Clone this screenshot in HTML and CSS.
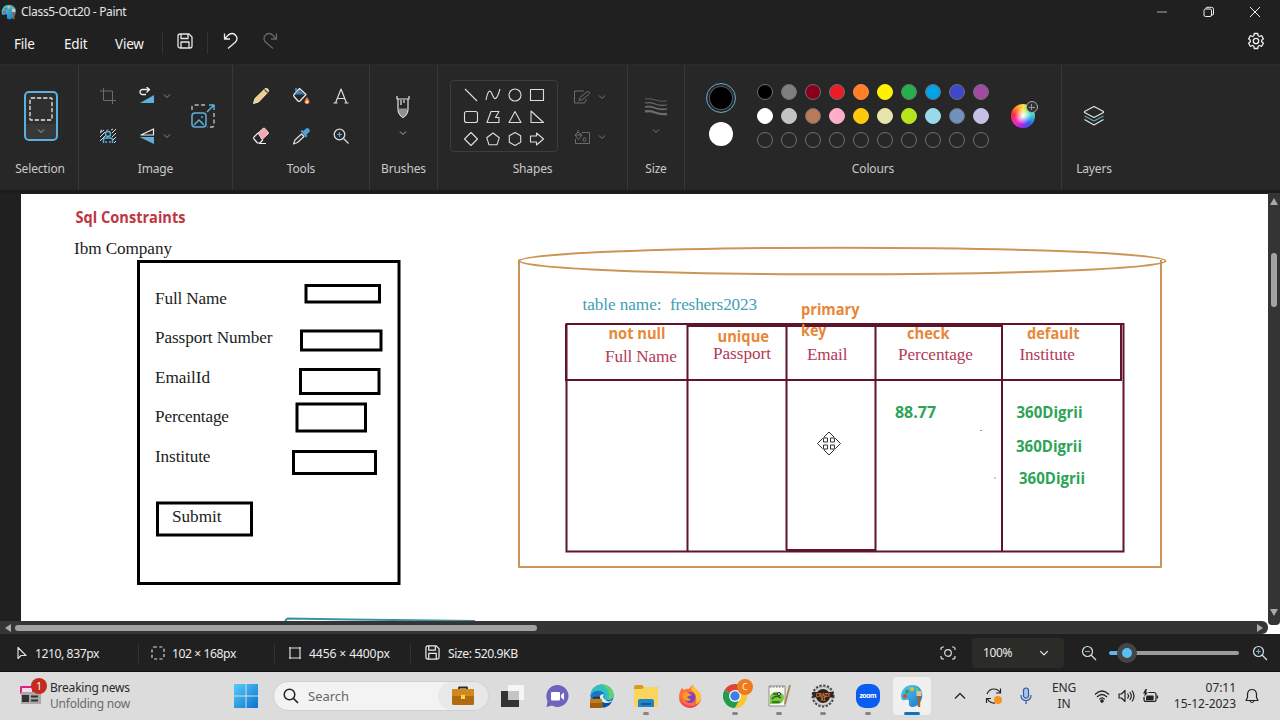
FILE: index.html
```html
<!DOCTYPE html>
<html lang="en">
<head>
    <meta charset="UTF-8">
    <meta name="viewport" content="width=device-width, initial-scale=1.0">
    <title>Class5-Oct20 - Paint</title>
    <link rel="stylesheet" href="styles.css">
</head>
<body>

<svg class="defs" width="0" height="0">
    <defs>
        <symbol id="chev" viewBox="0 0 8 8"><path d="M1 2.500l3 3 3-3" fill="none" stroke="currentColor" stroke-width="1"/></symbol>
        <symbol id="save" viewBox="0 0 16 16">
            <path d="M1 3a2 2 0 0 1 2-2h9l3 3v9a2 2 0 0 1-2 2H3a2 2 0 0 1-2-2zM4 1v4.500h7V1M4 15V9h8v6" fill="none" stroke="currentColor" stroke-width="1.300"/>
        </symbol>
        <linearGradient id="gPal" x1="0" y1="0" x2="1" y2="1"><stop offset="0" stop-color="#55cdf2"/><stop offset="1" stop-color="#1677c4"/></linearGradient>
        <symbol id="palette" viewBox="0 0 24 24">
            <path d="M12 1C5 1 1 6.500 1 12c0 4 2 5 4 4 3-1.500 4.500 0 4 3-.5 4 3 5 7 3 9-5 9-21-4-21z" fill="url(#gPal)"/>
            <circle cx="12" cy="5" r="2" fill="#f2b632"/><circle cx="7" cy="7.500" r="2" fill="#3f9d45"/>
            <circle cx="5" cy="12" r="2" fill="#c8503c"/><circle cx="17" cy="5.500" r="1.500" fill="#5ed06a"/>
            <path d="M16.500 7h5v5h-5z" fill="#dcc7a2"/><path d="M16.500 12h5l-1.300 3v8h-2.400v-8z" fill="#9c6434"/>
        </symbol>
    </defs>
</svg>

<div class="window">
    <header class="titlebar">
        <svg class="app-icon" width="16" height="16"><use href="#palette"/></svg>
        <span class="title">Class5-Oct20 - Paint</span>
        <div class="win-buttons">
            <svg width="12" height="12" viewBox="0 0 12 12"><path d="M1 6h10" stroke="#aaa"/></svg>
            <svg width="12" height="12" viewBox="0 0 12 12"><rect x="1" y="3" width="7.500" height="7.500" rx="1.500"/><path d="M3 3V2.300q0-1 1-1H8.500a2 2 0 0 1 2 2V8q0 1-1.500 1"/></svg>
            <svg width="12" height="12" viewBox="0 0 12 12"><path d="M1 1l10 10M11 1L1 11"/></svg>
        </div>
    </header>

    <nav class="menubar">
        <span class="menu menu-file">File</span>
        <span class="menu menu-edit">Edit</span>
        <span class="menu menu-view">View</span>
        <i class="bar"></i>
        <svg class="m-save" width="16" height="16"><use href="#save"/></svg>
        <i class="bar"></i>
        <svg class="m-undo" width="16" height="18" viewBox="0 0 16 18"><path d="M1.500 1.500v5.500h5.500M1.800 6.800l3-3.300c3-3 6-2.300 8 0 1.800 2.300 1.500 4.500-.3 6.500L5 16.500"/></svg>
        <svg class="m-redo" width="16" height="18" viewBox="0 0 16 18"><path d="M14.500 1.500v5.500H9M14.200 6.800l-3-3.300c-3-3-6-2.300-8 0-1.800 2.300-1.500 4.500.3 6.500l7.500 6.500"/></svg>
        <svg class="m-gear" width="18" height="18" viewBox="0 0 18 18"><path d="M7.300 1.500h3.400l.5 2.300 1.200.7 2.300-.8 1.700 3L14.700 8.300v1.400l1.700 1.600-1.700 3-2.300-.8-1.200.7-.5 2.300H7.300l-.5-2.300-1.200-.7-2.300.8-1.700-3 1.700-1.600V8.300L1.600 6.700l1.700-3 2.300.8 1.200-.7z"/><circle cx="9" cy="9" r="2.700"/></svg>
    </nav>

    <section class="ribbon">
        <div class="group g-selection">
            <div class="tools">
                <div class="select-btn">
                    <svg width="24" height="24" viewBox="0 0 24 24"><rect x="1" y="1" width="22" height="22" rx="1" fill="none" stroke="#e8e8e8" stroke-width="1.300" stroke-dasharray="4.200 1.900"/></svg>
                    <svg class="chev" width="8" height="8"><use href="#chev"/></svg>
                </div>
            </div>
            <div class="label">Selection</div>
        </div>

        <div class="group g-image">
            <div class="tools">
                <div class="image-grid">
                    <svg class="crop off" width="18" height="18" viewBox="0 0 18 18"><path d="M1 4h12.500V17M4.500 1v12.500H17"/></svg>
                    <svg width="18" height="18" viewBox="0 0 18 18"><path d="M8 7.500H4.500a2.500 2.500 0 0 1 0-5H11M8.500 0l3 2.500-3 3" stroke="#eee" stroke-width="1.300"/><path d="M16 8v8H2z" fill="#5bb0dc"/></svg>
                    <svg class="chev off" width="8" height="8"><use href="#chev"/></svg>
                    <svg class="resize" width="26" height="26" viewBox="0 0 26 26">
                        <path d="M2 7V4q0-2 2-2h11M24 10v12q0 2-2 2h-5" stroke="#bbb" stroke-width="1.400" stroke-dasharray="4 2.500"/>
                        <rect x="2" y="10" width="14" height="14" rx="3" stroke="#5bb0dc" stroke-width="1.500"/>
                        <path d="M4 22l5-5 5 5M17 9l7-7M19 2h5v5" stroke="#5bb0dc" stroke-width="1.500"/><circle cx="12" cy="14" r="1" fill="#5bb0dc"/>
                    </svg>
                    <svg class="crop" width="18" height="16" viewBox="0 0 18 16"><path d="M1 5l4-3M1 9l5-5M1 13l5-5M3 2L1 3.500M9 1.500L7.500 3M17 5l-4 4M17 9l-4 4M17 13l-2 2M12 2l2-1M13 5l4-4" stroke="#ddd"/><circle cx="9" cy="6" r="2.500" stroke="#5bb0dc" stroke-width="1.400"/><path d="M4.500 15v-3q0-2 2-2h5q2 0 2 2v3M7 15v-2M11 15v-2" stroke="#5bb0dc" stroke-width="1.400"/></svg>
                    <svg width="18" height="18" viewBox="0 0 18 18"><path d="M15.500 2v6H3z" stroke="#eee" stroke-width="1.200"/><path d="M16 10v7L1.500 10z" fill="#5bb0dc"/></svg>
                    <svg class="chev off" width="8" height="8"><use href="#chev"/></svg>
                </div>
            </div>
            <div class="label">Image</div>
        </div>

        <div class="group g-tools">
            <div class="tools">
                <div class="tools-grid">
                    <svg width="18" height="18" viewBox="0 0 18 18"><path d="M1.500 16.500l1.500-5L13 1.800q1.500-1 2.800.3t.4 2.800L6.500 15z" fill="#ecd08a" stroke="#f4ecd8"/><path d="M12.500 2.500l3.200 3.200" stroke="#555" stroke-width="1.300"/></svg>
                    <svg width="18" height="18" viewBox="0 0 18 18"><path d="M7.500 1.500l6.500 6-6 6.500q-1 .8-2 0L2 9.500q-.8-1 0-2z" stroke="#eee" stroke-width="1.200"/><path d="M3 7.500l4.500-4.500 5 4.500z" fill="#3b85bd"/><path d="M4 1v5" stroke="#5bb0dc" stroke-width="1.300"/><path d="M15 10q5 6.500 0 7-5-.5 0-7z" fill="#e8864d"/><circle cx="15" cy="15" r="1.200" fill="#fbe6c4"/></svg>
                    <svg width="18" height="18" viewBox="0 0 18 18"><path d="M3.500 16L9 2l5.500 14M5.500 11.500h7M1.500 16h4M12.500 16h4" stroke="#ddd" stroke-width="1.200"/></svg>
                    <svg width="18" height="18" viewBox="0 0 18 18"><path d="M6 6l5-4.500q1-.8 2 0L16 5q.8 1 0 2l-6 5.500z" fill="#f3a9b4" stroke="#f7d0d5"/><path d="M6 6L2 10q-.8 1 0 2l3.500 4h2.500l3-3.500M7 16.500h7" stroke="#eee" stroke-width="1.200"/></svg>
                    <svg width="18" height="18" viewBox="0 0 18 18"><path d="M9.500 7L3 13l-1.500 4 4-1.500 6.500-6z" stroke="#ddd" stroke-width="1.200"/><path d="M8.500 4l1.500-1 1.500 1 2.500-2.500q1.500-1 3 .5t.3 3L14.500 7.500l1 1.500-1.500 1.500z" fill="#4da3d4"/></svg>
                    <svg width="18" height="18" viewBox="0 0 18 18"><circle cx="7.500" cy="7.500" r="5.300" stroke="#ddd" stroke-width="1.300"/><path d="M11.500 11.500l5 5" stroke="#ddd" stroke-width="1.300"/><path d="M7.500 5v5M5 7.500h5" stroke="#5bb0dc" stroke-width="1.200"/></svg>
                </div>
            </div>
            <div class="label">Tools</div>
        </div>

        <div class="group g-brushes">
            <div class="tools stack">
                <svg width="16" height="24" viewBox="0 0 16 24"><path d="M2 1v3h12V1M3 4v10q0 5 5 8.500 5-3.500 5-8.500V4M6 5v5M9 5v3" stroke="#e4e4e4" stroke-width="1.200"/><path d="M3.500 13.500h9q0 5-4.500 8.500-4.500-3.500-4.500-8.500z" fill="#919191"/></svg>
                <svg class="chev" width="8" height="8"><use href="#chev"/></svg>
            </div>
            <div class="label">Brushes</div>
        </div>

        <div class="group g-shapes">
            <div class="tools">
                <div class="shape-box">
                    <svg viewBox="0 0 16 16"><path d="M2 2l12 12"/></svg>
                    <svg viewBox="0 0 16 16"><path d="M1 13C3 3 5 2 7 7s4 9 8-5"/></svg>
                    <svg viewBox="0 0 16 16"><circle cx="8" cy="8" r="6"/></svg>
                    <svg viewBox="0 0 16 16"><path d="M1.500 2.500h13v11h-13z"/></svg>
                    <svg viewBox="0 0 16 16"><rect x="1.500" y="2.500" width="13" height="11" rx="2"/></svg>
                    <svg viewBox="0 0 16 16"><path d="M6 2.500h8l-3.500 6h3.500v5H2z"/></svg>
                    <svg viewBox="0 0 16 16"><path d="M8 2.500l6 11H2z"/></svg>
                    <svg viewBox="0 0 16 16"><path d="M2 2v11.500h12.500z"/></svg>
                    <svg viewBox="0 0 16 16"><path d="M8 1.500L14.500 8 8 14.500 1.500 8z"/></svg>
                    <svg viewBox="0 0 16 16"><path d="M8 2l6.300 4.700L12 13.800H4L1.700 6.700z"/></svg>
                    <svg viewBox="0 0 16 16"><path d="M8 1.500l5.700 3.200v6.600L8 14.500l-5.700-3.200V4.700z"/></svg>
                    <svg viewBox="0 0 16 16"><path d="M1.500 5h6V2L14.500 8l-7 6v-3h-6z"/></svg>
                </div>
                <div class="shape-opts off">
                    <svg width="18" height="16" viewBox="0 0 18 16"><path d="M11 2H1.500v12h10l2-4M6 11.500l1-3L14 2.800q1.500-.8 2.300.3t-.3 2.200L9 10.800z"/></svg>
                    <svg class="chev" width="8" height="8"><use href="#chev"/></svg>
                    <svg width="18" height="16" viewBox="0 0 18 16"><path d="M9 3.500h7.500v11h-14V10M5 1v3M2 6l3-3 4 3-3.500 4.500zM2 6h7M11.500 8q3 4 0 4.500-3-.5 0-4.500z"/></svg>
                    <svg class="chev" width="8" height="8"><use href="#chev"/></svg>
                </div>
            </div>
            <div class="label">Shapes</div>
        </div>

        <div class="group g-size">
            <div class="tools stack off">
                <svg width="24" height="20" viewBox="0 0 24 20"><path d="M1 2q5-1 10 1t12 1" stroke-width=".8"/><path d="M1 6q5-1 10 1t12 1" stroke-width="1.200"/><path d="M1 10q5-1 10 1t12 1" stroke-width="1.700"/><path d="M1 14.500q5-1 10 1t12 1.500" stroke-width="2.300"/></svg>
                <svg class="chev" width="8" height="8"><use href="#chev"/></svg>
            </div>
            <div class="label">Size</div>
        </div>

        <div class="group g-colours">
            <div class="tools">
                <div class="current">
                    <b class="fore"></b>
                    <b class="back"></b>
                </div>
                <div class="swatches">
                    <b class="black"></b><b class="grey"></b><b class="darkred"></b><b class="red"></b><b class="orange"></b><b class="yellow"></b><b class="green"></b><b class="turquoise"></b><b class="indigo"></b><b class="purple"></b>
                    <b class="white"></b><b class="silver"></b><b class="brown"></b><b class="rose"></b><b class="gold"></b><b class="cream"></b><b class="lime"></b><b class="sky"></b><b class="bluegrey"></b><b class="lavender"></b>
                    <b></b><b></b><b></b><b></b><b></b><b></b><b></b><b></b><b></b><b></b>
                </div>
                <div class="wheel"><span class="plus"></span></div>
            </div>
            <div class="label">Colours</div>
        </div>

        <div class="group g-layers">
            <div class="tools">
                <svg width="22" height="22" viewBox="0 0 22 22"><path d="M11 1.500l9.500 5v1L11 12.500 1.500 7.500v-1z" stroke="#e4e4e4" stroke-width="1.200"/><path d="M1.500 11L11 16l9.500-5" stroke="#58a9bd" stroke-width="1.200"/><path d="M1.500 14.500l9.500 5.500 9.500-5.500" stroke="#e4e4e4" stroke-width="1.200"/></svg>
            </div>
            <div class="label">Layers</div>
        </div>
    </section>

    <main class="workspace">
        <svg class="canvas" width="1247" height="427" viewBox="21 194 1247 427">
            <!-- form -->
            <text class="head" x="75.500" y="223" textLength="110" lengthAdjust="spacingAndGlyphs">Sql Constraints</text>
            <text class="form" x="74" y="254" textLength="98">Ibm Company</text>
            <g class="box">
                <rect x="138.500" y="261.500" width="260.500" height="322"/>
                <rect x="306" y="285.500" width="73.500" height="16.500"/>
                <rect x="301.500" y="331" width="79.500" height="19"/>
                <rect x="300.500" y="369.500" width="78.500" height="24"/>
                <rect x="297" y="404" width="68.500" height="27"/>
                <rect x="293.500" y="451.500" width="82" height="22"/>
                <rect x="157.500" y="503" width="94" height="32"/>
            </g>
            <g class="form">
                <text x="155" y="304" textLength="72">Full Name</text>
                <text x="155" y="343" textLength="117.500">Passport Number</text>
                <text x="155" y="382.500" textLength="55">EmailId</text>
                <text x="155" y="422" textLength="74">Percentage</text>
                <text x="155" y="461.500" textLength="55.500">Institute</text>
                <text x="172" y="522" textLength="49.500">Submit</text>
            </g>

            <!-- database -->
            <path class="db" d="M519 259.500V567H1161V260"/>
            <ellipse class="db" cx="842.500" cy="261" rx="323" ry="13.300"/>

            <!-- table -->
            <text class="tname" x="582.500" y="309.500" textLength="79">table name:</text>
            <text class="tname" x="670" y="309.500" textLength="87">freshers2023</text>
            <g class="table">
                <path d="M566.500 324H1123.500V551.500H566.500z"/>
                <path d="M566 324v56h555V324M687.500 324v227M786.500 325v225M875.500 325v226M1002 325v226M687 326h315M786 550h90"/>
            </g>
            <g class="rule">
                <text x="608.500" y="338.500" textLength="57" lengthAdjust="spacingAndGlyphs">not null</text>
                <text x="717.500" y="342" textLength="51.500" lengthAdjust="spacingAndGlyphs">unique</text>
                <text x="801" y="314.500" textLength="58.500" lengthAdjust="spacingAndGlyphs">primary</text>
                <text x="801" y="336" textLength="25.500" lengthAdjust="spacingAndGlyphs">key</text>
                <text x="907" y="339" textLength="42.500" lengthAdjust="spacingAndGlyphs">check</text>
                <text x="1027" y="339" textLength="52.500" lengthAdjust="spacingAndGlyphs">default</text>
            </g>
            <g class="col">
                <text x="605" y="362" textLength="72">Full Name</text>
                <text x="713" y="359" textLength="58">Passport</text>
                <text x="807" y="360" textLength="40.500">Email</text>
                <text x="898" y="360" textLength="75">Percentage</text>
                <text x="1019.500" y="360" textLength="55.500">Institute</text>
            </g>
            <g class="value">
                <text x="895" y="418" textLength="41" lengthAdjust="spacingAndGlyphs">88.77</text>
                <text x="1016.500" y="418" textLength="66" lengthAdjust="spacingAndGlyphs">360Digrii</text>
                <text x="1016" y="452" textLength="66" lengthAdjust="spacingAndGlyphs">360Digrii</text>
                <text x="1019" y="483.500" textLength="66" lengthAdjust="spacingAndGlyphs">360Digrii</text>
            </g>
            <path d="M980.500 430.500h1.200M994.500 478h1.200" stroke="#555"/>
            <path d="M285 621l2.500-2.500L350 619.500 475 621" fill="none" stroke="#3a91a6" stroke-width="2"/>

            <!-- move cursor -->
            <path class="cursor" transform="translate(829 443.500)" d="M0-11.500L5-6.500V-5.500H1.500V-1.500H5.500V-5H6.500L11.500 0 6.500 5H5.500V1.500H1.500V5.500H5V6.500L0 11.500-5 6.500V5.500H-1.500V1.500H-5.500V5H-6.500L-11.500 0-6.500-5H-5.500V-1.500H-1.500V-5.500H-5V-6.500z"/>
        </svg>

        <div class="vscroll">
            <svg width="8" height="7" viewBox="0 0 8 7"><path d="M4 0l4 7H0z"/></svg>
            <i class="thumb"></i>
            <svg class="down" width="8" height="7" viewBox="0 0 8 7"><path d="M4 7L0 0h8z"/></svg>
        </div>
        <div class="hscroll">
            <svg width="7" height="8" viewBox="0 0 7 8"><path d="M0 4l6-4v8z"/></svg>
            <i class="thumb"></i>
            <svg class="right" width="7" height="8" viewBox="0 0 7 8"><path d="M7 4L1 0v8z"/></svg>
        </div>
        <div class="corner"></div>
    </main>

    <footer class="statusbar">
        <div class="stat s-pos">
            <svg width="10" height="14" viewBox="0 0 10 14"><path d="M1 1.500v11L4 9.500h5z"/></svg>
            <span>1210, 837px</span>
        </div>
        <div class="stat s-sel">
            <svg width="14" height="14" viewBox="0 0 14 14"><rect x="1" y="1" width="12" height="12" rx="2" stroke-dasharray="3 2.300"/></svg>
            <span>102 × 168px</span>
        </div>
        <div class="stat s-dim">
            <svg width="14" height="14" viewBox="0 0 14 14"><path d="M2 1v12M12 1v12M1 2h12M1 12h12"/></svg>
            <span>4456 × 4400px</span>
        </div>
        <div class="stat s-size">
            <svg width="15" height="15"><use href="#save"/></svg>
            <span>Size: 520.9KB</span>
        </div>
        <div class="zoom">
            <svg width="16" height="14" viewBox="0 0 16 14"><path d="M1 4V3q0-2 2-2h1M12 1h1q2 0 2 2v1M15 10v1q0 2-2 2h-1M4 13H3q-2 0-2-2v-1"/><circle cx="8" cy="7" r="3.300"/></svg>
            <div class="zoom-box"><span>100%</span><svg width="10" height="10"><use href="#chev"/></svg></div>
            <svg width="16" height="16" viewBox="0 0 16 16"><circle cx="6.500" cy="6.500" r="5"/><path d="M10 10l5 5"/><path d="M4 6.500h5" stroke="#5bb0dc"/></svg>
            <div class="slider"><span class="knob"></span></div>
            <svg width="16" height="16" viewBox="0 0 16 16"><circle cx="6.500" cy="6.500" r="5"/><path d="M10 10l5 5"/><path d="M4 6.500h5M6.500 4v5" stroke="#5bb0dc"/></svg>
        </div>
    </footer>
</div>

<div class="taskbar">
    <div class="news">
        <div class="news-icon">
            <svg width="24" height="24" viewBox="0 0 24 24"><path d="M2 3h12v6H2z" fill="#f6dcea" stroke="#e0218a" stroke-width="2"/><path d="M2 8h20v12H2z" fill="#a9a9a9"/><path d="M3 11h7v7H3z" fill="#333"/><path d="M12 11.500h7v2h-7zM12 15.500h7v2h-7z" fill="#333"/></svg>
            <span class="badge">1</span>
        </div>
        <div class="news-text">
            <div>Breaking news</div>
            <div class="muted">Unfolding now</div>
        </div>
    </div>
    <svg class="start" width="24" height="24" viewBox="0 0 24 24">
        <defs><linearGradient id="gWin" x1="0" y1="0" x2="1" y2="1"><stop offset="0" stop-color="#56cdf9"/><stop offset="1" stop-color="#0a72cf"/></linearGradient></defs>
        <path d="M0 0h11.500v11.500H0zM12.500 0H24v11.500H12.500zM0 12.500h11.500V24H0zM12.500 12.500H24V24H12.500z" fill="url(#gWin)"/>
    </svg>
    <div class="search">
        <svg width="16" height="16" viewBox="0 0 16 16"><circle cx="6.500" cy="6.500" r="5.300" fill="none" stroke="#222" stroke-width="1.500"/><path d="M10.500 10.500L15 15" stroke="#222" stroke-width="1.700"/></svg>
        <span>Search</span>
        <div class="case">
            <svg width="24" height="20" viewBox="0 0 24 20"><path d="M8 4V1.500h8V4" fill="none" stroke="#3b2a16" stroke-width="1.800"/><rect x="1" y="3" width="22" height="16" rx="1.500" fill="#b06a10"/><path d="M1 4.500q0-1.500 1.500-1.500h19Q23 3 23 4.500V10H1z" fill="#cf8a1c"/><rect x="10" y="9" width="4" height="4" fill="#ffd34d"/></svg>
        </div>
    </div>
    <div class="apps">
        <div class="app"><svg viewBox="0 0 24 24"><path d="M0 7h18v16H0z" fill="#333"/><path d="M7 1h16v15H7z" fill="#f6f6f6"/><path d="M7 7h11v9H7z" fill="#c4c4c4"/></svg></div>
        <div class="app"><svg viewBox="0 0 24 24"><path d="M12 1a11 11 0 1 1-5 20.500L1.500 23 2.500 17A11 11 0 0 1 12 1z" fill="#6f64bd"/><rect x="6" y="8" width="9" height="8.500" rx="1" fill="#fff"/><path d="M16 11l3-2.500v7.500l-3-2.500z" fill="#fff"/></svg></div>
        <div class="app"><svg viewBox="0 0 24 24"><circle cx="12" cy="12" r="11.500" fill="#1976c5"/><path d="M1 9C4-2 21-2 23.500 10q.5 6-6 6-4 0-3-3 1-5-5-6Q4 6 1 11z" fill="#2fc0bb"/><path d="M12 1q10 0 11.500 9 .5 5-5 6 3-10-6.500-15z" fill="#62d26a"/><path d="M12 15q4 4 10 2-3 6-9 6.500z" fill="#124f93"/><path d="M24 15.500q-6 4-9 0-3-2-1-5-4-1-4 3 1 5 6 5.500 5 0 8-3.500z" fill="#e6edf2"/><path d="M4 15V13.500h5V15" fill="none" stroke="#3b2a16" stroke-width="1.300"/><path d="M0 15h12v9H0z" fill="#c47d18"/><path d="M0 19h12v5H0z" fill="#a05e0c"/></svg></div>
        <div class="app open"><svg viewBox="0 0 24 24"><path d="M0 3q0-2 2-2h6l2 2h14v10H0z" fill="#d99b1e"/><path d="M0 5h8l2-2h13q1 0 1 1v18q0 1-1 1H1q-1 0-1-1z" fill="#fbd45d"/><path d="M4 23v-6q0-2 2-2h12q2 0 2 2v6z" fill="#2186c9"/><path d="M7 19h10v2H7z" fill="#115c9b"/></svg></div>
        <div class="app"><svg viewBox="0 0 24 24"><path d="M4 4l2 2q3-2 5-1 2-3 4-4 1 3 4 5 4 4 4 8a11 10 0 0 1-22 0Q1 8 4 4z" fill="#ff7139"/><path d="M15 1q1 3 4 5 4 4 4 8-1 5-5 7 2-12-5-15 0-3 2-5z" fill="#ffc52f"/><circle cx="12" cy="13.500" r="5.500" fill="#7a45c4"/><path d="M5 9q4-2 7 1l2 1-3 1-2 1q1 2 4 2-3 4-7 0-3-3-1-6z" fill="#ff9a2c"/><path d="M2 12q1 9 11 10 7-1 9-6-2 7-10 8Q2 23 2 12z" fill="#ee3f63"/></svg></div>
        <div class="app open"><svg viewBox="0 0 24 24"><circle cx="12" cy="12" r="12" fill="#e0e0e0"/><path d="M12 12L1.600 6A12 12 0 0 1 22.400 6z" fill="#db4437"/><path d="M12 12L1.600 6A12 12 0 0 0 12 24l5-9z" fill="#249c4c"/><path d="M12 12l10.400-6A12 12 0 0 1 12 24l5-9z" fill="#f7c92e"/><path d="M12 6h10.400L17 15z" fill="#f7c92e"/><circle cx="12" cy="12" r="6" fill="#fff"/><circle cx="12" cy="12" r="4.700" fill="#3f7de8"/></svg><span class="profile">C</span></div>
        <div class="app open"><svg viewBox="0 0 24 24"><path d="M2 2h16v20H2z" fill="#f8f8f4" stroke="#777" stroke-width=".8"/><path d="M3 3h14" stroke="#666" stroke-dasharray="1.500 1.500"/><path d="M3 12q3-5 8-4 6 1 6 5 0 6-6 7H3z" fill="#7cc63c"/><path d="M5 15q4-5 9-1M6 10h4M5 18h8" stroke="#236021" stroke-width="1.300" fill="none"/><circle cx="12" cy="10" r="1.500" fill="#fff" stroke="#222"/><path d="M23 1l-5 19" stroke="#ad8248" stroke-width="1.700"/></svg></div>
        <div class="app open"><svg viewBox="0 0 24 24"><circle cx="12" cy="12" r="10.500" fill="#ddd" stroke="#444" stroke-width="2" stroke-dasharray="2.200 1.600"/><circle cx="12" cy="12" r="9.500" fill="#d6d6d6" stroke="#666" stroke-width=".6"/><circle cx="12" cy="12" r="7" fill="#2b211d"/><path d="M1.500 8h21v5.500h-21z" fill="#352219"/><text x="12" y="12.500" class="tiny">CRAZY</text><text x="12" y="17" class="tiny">XI</text></svg></div>
        <div class="app open"><svg viewBox="0 0 24 24"><rect width="24" height="24" rx="9" fill="#0b5cf0"/><text x="12" y="14" class="zoom-logo" textLength="17">zoom</text></svg></div>
        <div class="app open active"><svg><use href="#palette"/></svg></div>
    </div>
    <div class="tray">
        <svg class="t-up" width="12" height="8" viewBox="0 0 12 8"><path d="M1 6.500l5-5 5 5"/></svg>
        <svg class="t-sync" width="18" height="18" viewBox="0 0 18 18"><path d="M2 7q2-5 7-5 4 0 6.500 4M15.500 1.500V6H11M10 16q-5 .5-7.500-4M1.500 16v-4.500H6"/><circle cx="13" cy="13" r="4" fill="#f7941d" stroke="none"/></svg>
        <svg class="t-mic" width="12" height="18" viewBox="0 0 12 18"><rect x="3.500" y="1" width="5" height="10" rx="2.500" fill="#a9c6ea"/><path d="M1 8q0 5.500 5 5.500T11 8M6 13.500V17"/></svg>
        <div class="lang"><div>ENG</div><div>IN</div></div>
        <svg class="t-wifi" width="16" height="14" viewBox="0 0 16 14"><path d="M1 5.500q7-7 14 0M3 8q5-5 10 0M5.300 10.300q2.700-2.700 5.400 0"/><circle cx="8" cy="12" r="1.200" fill="#222"/></svg>
        <svg class="t-vol" width="17" height="14" viewBox="0 0 17 14"><path d="M1 5h2.500L7 1.500v11L3.500 9H1zM9.500 4.500q2 2.500 0 5M11.800 3q3 4 0 8M14 1.500q4 5.500 0 11"/></svg>
        <svg class="t-bat" width="17" height="14" viewBox="0 0 17 14"><path d="M6.500 3.500H12q2 0 2 2v5q0 2-2 2H4q-2 0-2-2V8M15.500 6.500v3"/><path d="M5 7h6v4H4.500z" fill="#222"/><path d="M3.500 0L1 4.500h2L2 8l4-4.500H4L5 0z" fill="#222" stroke="none"/></svg>
        <div class="clock"><div>07:11</div><div>15-12-2023</div></div>
        <svg class="t-bell" width="14" height="16" viewBox="0 0 14 16"><path d="M1 12.500h12L11.500 9.500V6q-.5-4.500-4.500-4.500T2.500 6v3.500zM5 13q2 3 4 0"/></svg>
    </div>
</div>

</body>
</html>
```
FILE: styles.css
```css
* {
    box-sizing: border-box;
}
body {
    margin: 0;
    width: 1280px;
    height: 720px;
    overflow: hidden;
    background: #202020;
    color: #e6e6e6;
    font-family: "Noto Sans", "Open Sans", sans-serif;
    font-size: 12px;
    white-space: nowrap;
}
svg {
    display: block;
    flex: none;
    fill: none;
    stroke-linejoin: round;
}
.defs {
    position: absolute;
}
.window {
    height: 672px;
    display: flex;
    flex-direction: column;
}

/* title bar */
.titlebar {
    height: 23px;
    display: flex;
    align-items: center;
    padding: 0 19px 0 1px;
}
.title {
    margin-left: 4px;
    font-size: 12px;
    letter-spacing: -0.32px;
}
.win-buttons {
    margin-left: auto;
    display: flex;
    gap: 34.5px;
    stroke: #eee;
}

/* menu */
.menubar {
    height: 41px;
    display: flex;
    align-items: center;
    padding: 0 15px 2px 14px;
    stroke: #eee;
    stroke-width: 1.3;
}
.menubar svg {
    margin-bottom: 3px;
}
.menu {
    font-size: 13.5px;
    letter-spacing: -0.2px;
    color: #f4f4f4;
    padding-top: 2px;
}
.menu-file {
    width: 50px;
}
.menu-edit {
    width: 51px;
}
.menu-view {
    width: 47px;
}
.bar {
    width: 1px;
    height: 22px;
    background: #333;
}
.m-save {
    margin: 0 14px;
    stroke: none;
}
.m-undo {
    margin-left: 15px;
}
.m-redo {
    margin-left: 23px;
    stroke: #666;
}
.m-gear {
    margin-left: auto;
}

/* ribbon */
.ribbon {
    height: 129px;
    display: flex;
    background: #272727;
    border-bottom: 3px solid #1c1c1c;
    border-top: 1px solid #2b2b2b;
}
.group {
    border-right: 1px solid #383838;
    padding-top: 11px;
    color: #ddd;
}
.g-selection { width: 79px; }
.g-image { width: 154px; }
.g-tools { width: 137px; }
.g-brushes { width: 68px; }
.g-shapes { width: 190px; }
.g-size { width: 57px; }
.g-colours { width: 377px; }
.g-layers {
    width: 64px;
    border-right: 0;
}
.tools {
    height: 80px;
    display: flex;
    align-items: center;
    justify-content: center;
}
.stack {
    flex-direction: column;
    gap: 10px;
}
.stack svg {
    margin-right: 1px;
}
.label {
    margin-top: 3px;
    line-height: 20px;
    text-align: center;
    letter-spacing: -0.15px;
    color: #c9c9c9;
}
.g-selection .label {
    padding-left: 2px;
}
.off {
    color: #8a8a8a;
    stroke: #6c6c6c;
}
.chev {
    color: #aaa;
    stroke: none;
}
.chev.off {
    color: #8a8a8a;
}
.off .chev {
    color: #777;
}
.select-btn {
    width: 34px;
    height: 50px;
    margin-left: 3px;
    border: 2px solid #5bb0dc;
    border-radius: 5px;
    background: linear-gradient(#2f2f2f 31px, #383838 31px);
    display: flex;
    flex-direction: column;
    align-items: center;
    justify-content: space-between;
    padding: 4px 0;
}
.image-grid {
    display: grid;
    grid-template-columns: 40px 20px 20px 52px;
    grid-template-rows: 40px 40px;
    align-items: center;
    justify-items: center;
    margin-left: 15px;
}
.image-grid .crop {
    margin-right: 19px;
}
.image-grid .resize {
    grid-row: 1 / 3;
    grid-column: 4;
}
.tools-grid {
    display: grid;
    grid-template-columns: repeat(3, 40px);
    grid-template-rows: 40px 40px;
    align-items: center;
    justify-items: center;
}
.g-shapes .tools {
    justify-content: flex-start;
    padding-left: 12px;
}
.shape-box {
    width: 108px;
    height: 72px;
    padding: 2px 1px 0 0;
    border: 1px solid #3d3d3d;
    border-radius: 4px;
    display: grid;
    grid-template-columns: repeat(4, 22px);
    grid-template-rows: repeat(3, 22px);
    place-content: center;
    place-items: center;
    stroke: #ddd;
    stroke-width: 1.1;
}
.shape-box svg {
    width: 16px;
    height: 16px;
}
.shape-opts {
    display: grid;
    grid-template-columns: 20px 20px;
    grid-template-rows: 40px 40px;
    place-items: center;
    margin: 2px 0 0 14px;
}
.g-colours .tools {
    justify-content: flex-start;
    padding-left: 21px;
}
.current {
    display: flex;
    flex-direction: column;
    align-items: center;
    gap: 9px;
    margin-top: -4px;
}
.current b {
    border-radius: 50%;
}
.fore {
    width: 30px;
    height: 30px;
    border: 1.5px solid #5bb0dc;
    background: #000;
    box-shadow: inset 0 0 0 2px #272727, inset 0 0 0 3px #555;
}
.back {
    width: 24px;
    height: 24px;
    background: #fff;
}
.swatches {
    display: grid;
    grid-template-columns: repeat(10, 16px);
    gap: 8px;
    margin-left: 20.5px;
}
.swatches b {
    height: 16px;
    border: 1px solid #6f6f6f;
    border-radius: 50%;
}
.swatches .black { background: #000; }
.swatches .grey { background: #7f7f7f; }
.swatches .darkred { background: #88001b; }
.swatches .red { background: #ec1c24; }
.swatches .orange { background: #ff7f27; border-color: #ff8f47; }
.swatches .yellow { background: #fff200; border-color: #fff200; }
.swatches .green { background: #22b14c; }
.swatches .turquoise { background: #00a2e8; }
.swatches .indigo { background: #3f48cc; }
.swatches .purple { background: #a349a4; }
.swatches .white { background: #fff; border-color: #fff; }
.swatches .silver { background: #c3c3c3; border-color: #c3c3c3; }
.swatches .brown { background: #b97a56; }
.swatches .rose { background: #ffaec9; border-color: #ffaec9; }
.swatches .gold { background: #ffc90e; border-color: #ffc90e; }
.swatches .cream { background: #e8e4ae; border-color: #e8e4ae; }
.swatches .lime { background: #b5e61d; border-color: #b5e61d; }
.swatches .sky { background: #99d9ea; border-color: #99d9ea; }
.swatches .bluegrey { background: #7092be; }
.swatches .lavender { background: #c8bfe7; border-color: #c8bfe7; }
.wheel {
    position: relative;
    width: 24px;
    height: 24px;
    margin-left: 22px;
    border-radius: 50%;
    background: radial-gradient(circle, #fff 2%, rgba(255, 255, 255, 0) 50%), conic-gradient(#ffe23c, #a5f04a 25deg, #35e0d0 80deg, #2b5cf0 140deg, #9a2be8 180deg, #f02bc0 225deg, #ff2a3c 280deg, #ff8a2a 320deg, #ffe23c);
}
.plus {
    position: absolute;
    top: -3px;
    right: -3px;
    width: 12px;
    height: 12px;
    border: 1px solid #aaa;
    border-radius: 50%;
    background: linear-gradient(#999, #999) center / 6px 1px no-repeat, linear-gradient(#999, #999) center / 1px 6px no-repeat, #333;
}

/* canvas */
.workspace {
    flex: 1;
    display: grid;
    grid-template-columns: 21px 1247px 12px;
    grid-template-rows: 428px 13px;
    background: #202020;
}
.canvas {
    grid-column: 2;
    margin-top: 1px;
    background: #fff;
}
.vscroll {
    display: flex;
    flex-direction: column;
    align-items: center;
    padding: 5px 0;
    background: #353434;
}
.vscroll svg,
.hscroll svg {
    fill: #aaa;
}
.thumb {
    background: #a3a3a3;
    border-radius: 3px;
}
.vscroll .thumb {
    width: 6px;
    height: 54px;
    margin-top: 48px;
}
.vscroll .down {
    margin-top: auto;
}
.hscroll {
    grid-column: 1 / 3;
    display: flex;
    align-items: center;
    padding: 0 5px;
    background: #353535;
    border-radius: 0 6px 6px 0;
    box-shadow: 6px 0 0 #fff;
    clip-path: inset(0);
}
.corner {
    background: #fff;
}
.corner::before {
    content: "";
    display: block;
    height: 4px;
    background: #353434;
    border-radius: 0 0 6px 6px;
}
.hscroll .thumb {
    width: 522px;
    height: 6px;
    margin-left: 3px;
}
.hscroll .right {
    margin-left: auto;
}
.canvas text {
    stroke: none;
}
.form,
.tname,
.col {
    font-family: "Liberation Serif", serif;
    font-size: 17.2px;
}
.form {
    fill: #1c1c1c;
}
.head,
.rule,
.value {
    font-family: "Open Sans", sans-serif;
    font-weight: 700;
    font-size: 15.5px;
}
.head {
    fill: #c0353f;
}
.box {
    stroke: #000;
    stroke-width: 3;
    stroke-linejoin: miter;
}
.db {
    stroke: #cc9455;
    stroke-width: 2;
}
.tname {
    fill: #3fa0b4;
}
.table {
    stroke: #5f1429;
    stroke-width: 2;
    stroke-linejoin: miter;
}
.rule {
    fill: #e88738;
}
.col {
    fill: #b23a58;
}
.value {
    fill: #2ba455;
}
.cursor {
    fill: #fff;
    stroke: #333;
}

/* status bar */
.statusbar {
    height: 38px;
    display: flex;
    align-items: center;
    color: #ececec;
    stroke: #ddd;
    stroke-width: 1.2;
    border-bottom: 1px solid #111;
}
.stat {
    height: 20px;
    display: flex;
    align-items: center;
    border-right: 1px solid #333;
}
.stat span {
    padding-top: 2px;
    letter-spacing: -0.45px;
    font-size: 12.2px;
}
.s-pos {
    width: 139px;
    padding-left: 17px;
    gap: 8px;
}
.s-sel {
    width: 136px;
    padding-left: 12px;
    gap: 7px;
}
.s-dim {
    width: 136px;
    padding-left: 13px;
    gap: 7px;
}
.s-dim span {
    letter-spacing: -0.15px;
}
.s-size {
    border-right: 0;
    padding-left: 14px;
    gap: 8px;
}
.s-size svg {
    stroke: none;
}
.zoom {
    margin-left: auto;
    display: flex;
    align-items: center;
    padding-right: 12px;
}
.zoom-box {
    width: 92px;
    height: 30px;
    margin: 0 17px 0 16px;
    padding: 0 15px 0 11px;
    border-radius: 4px;
    background: #2b2b28;
    display: flex;
    align-items: center;
    justify-content: space-between;
    letter-spacing: -0.4px;
}
.zoom-box svg {
    stroke: none;
}
.slider {
    position: relative;
    width: 130px;
    height: 4px;
    margin: 0 13px 0 12px;
    border-radius: 2px;
    background: linear-gradient(90deg, #57b9ec 14px, #9b9b9b 14px);
}
.knob {
    position: absolute;
    left: 8px;
    top: -8px;
    width: 20px;
    height: 20px;
    border: 5px solid #454545;
    border-radius: 50%;
    background: #57c0f5;
}

/* taskbar */
.taskbar {
    height: 48px;
    display: flex;
    align-items: center;
    background: #dcdcdc;
    color: #2a2a2a;
}
.news {
    width: 214px;
    display: flex;
    align-items: center;
    padding-left: 19px;
    gap: 7px;
}
.news-icon {
    position: relative;
}
.badge {
    position: absolute;
    top: -6px;
    left: 12px;
    width: 16px;
    height: 16px;
    border-radius: 50%;
    background: #c42b1c;
    color: #fff;
    font-size: 10px;
    line-height: 16px;
    text-align: center;
}
.news-text {
    line-height: 16px;
    letter-spacing: -0.22px;
}
.muted {
    color: #6a6a6a;
}
.start {
    margin-left: 20px;
}
.search {
    width: 216px;
    height: 30px;
    margin-left: 15px;
    padding-left: 9px;
    border: 1px solid #cfcfcf;
    border-radius: 15px;
    background: #f3f3f3;
    display: flex;
    align-items: center;
    font-size: 13px;
    color: #666;
}
.search span {
    margin-left: 9px;
}
.case {
    width: 50px;
    height: 28px;
    margin-left: auto;
    border-radius: 14px;
    background: #e8e8e8;
    display: flex;
    align-items: center;
    justify-content: center;
}
.apps {
    display: flex;
    gap: 6.35px;
    margin-left: 5px;
}
.app {
    position: relative;
    width: 38px;
    height: 38px;
    display: flex;
    align-items: center;
    justify-content: center;
    border-radius: 4px;
}
.app svg {
    width: 24px;
    height: 24px;
}
.open::after {
    content: "";
    position: absolute;
    bottom: 0;
    left: 16px;
    width: 6px;
    height: 3px;
    border-radius: 2px;
    background: #858585;
}
.active {
    background: #f0f0ee;
}
.active::after {
    left: 11px;
    width: 16px;
    background: #1071c0;
}
.profile {
    position: absolute;
    top: 2px;
    right: 1px;
    width: 16px;
    height: 16px;
    border-radius: 50%;
    background: #ee7a1c;
    color: #fff;
    font-size: 8px;
    line-height: 16px;
    text-align: center;
}
.tiny {
    fill: #e0853a;
    font-size: 4.5px;
    font-weight: 700;
    text-anchor: middle;
}
.zoom-logo {
    fill: #fff;
    font-size: 7px;
    font-weight: 700;
    text-anchor: middle;
}
.tray {
    margin-left: auto;
    padding-right: 21px;
    display: flex;
    align-items: center;
    line-height: 16px;
    stroke: #222;
    stroke-width: 1.2;
}
.t-up {
    margin-right: 1px;
}
.t-sync {
    margin-left: 18px;
}
.t-mic {
    margin-left: 17px;
    stroke: #2a5caa;
}
.lang {
    width: 28px;
    margin: 0 16px 0 18px;
    text-align: center;
    letter-spacing: -0.1px;
}
.t-vol {
    margin-left: 8px;
}
.t-bat {
    margin-left: 7px;
}
.clock {
    width: 77px;
    text-align: right;
    letter-spacing: -0.05px;
}
.t-bell {
    margin-left: 9px;
}
```
